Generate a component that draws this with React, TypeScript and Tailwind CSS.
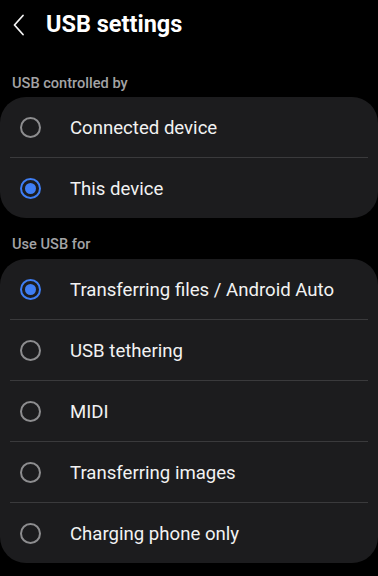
import React from 'react';

type Option = { label: string; selected?: boolean };

const controlled: Option[] = [
    { label: 'Connected device' },
    { label: 'This device', selected: true },
];

const usbFor: Option[] = [
    { label: 'Transferring files / Android Auto', selected: true },
    { label: 'USB tethering' },
    { label: 'MIDI' },
    { label: 'Transferring images' },
    { label: 'Charging phone only' },
];

function Radio({ selected }: { selected?: boolean }) {
    if (selected) {
        return (
            <div className="w-[21px] h-[21px] rounded-full border-2 border-[#3f7ef4] flex items-center justify-center">
                <div className="w-[11px] h-[11px] rounded-full bg-[#3f7ef4]" />
            </div>
        );
    }
    return <div className="w-[21px] h-[21px] rounded-full border-2 border-[#8d8d8f]" />;
}

function OptionCard({ options }: { options: Option[] }) {
    return (
        <div className="bg-[#1c1c1e] rounded-[26px]">
            {options.map((o, i) => (
                <div key={o.label}>
                    {i > 0 && <div className="mx-[10px] h-px bg-[#3a3a3c]" />}
                    <div className="h-[60px] flex items-center">
                        <div className="w-[70px] flex justify-center pr-[9px]">
                            <Radio selected={o.selected} />
                        </div>
                        <span className="pt-[3px] text-[18.6px] text-[#f2f2f2]">{o.label}</span>
                    </div>
                </div>
            ))}
        </div>
    );
}

export default function App() {
    return (
        <div className="w-[378px] h-[576px] bg-black overflow-hidden" style={{ fontFamily: 'Roboto, "Noto Sans", sans-serif' }}>
            {/* header */}
            <div className="h-[46px] pt-[3px] flex items-center">
                <div className="w-[46px] flex justify-center pr-[8px]">
                    <svg width="14" height="22" viewBox="0 0 14 22" fill="none">
                        <path d="M11 1.5 L2.5 11 L11 20.5" stroke="#f2f2f2" strokeWidth="1.8" strokeLinecap="round" strokeLinejoin="round" />
                    </svg>
                </div>
                <h1 className="text-[23.5px] font-bold text-white">USB settings</h1>
            </div>

            <div className="pt-[27px] pb-[4px] px-[12px] text-[14.6px] leading-[20px] text-[#a3a3a5] font-medium">USB controlled by</div>
            <OptionCard options={controlled} />

            <div className="pt-[16px] pb-[5px] px-[12px] text-[14.6px] leading-[20px] text-[#a3a3a5] font-medium">Use USB for</div>
            <OptionCard options={usbFor} />
        </div>
    );
}
